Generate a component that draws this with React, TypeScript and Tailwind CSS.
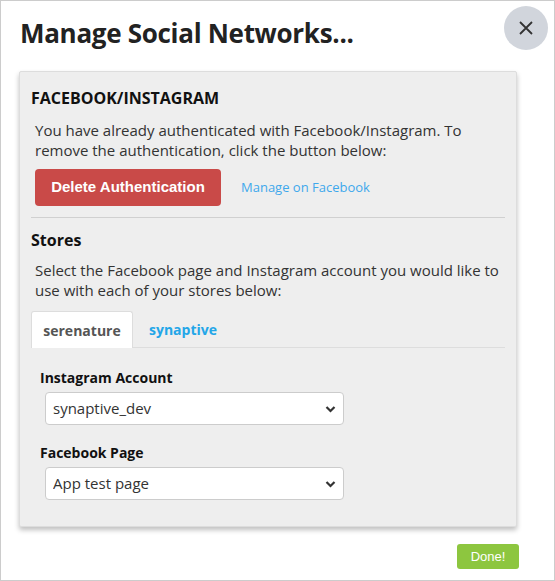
import { useState } from "react";

const stores = ["serenature", "synaptive"];

function SelectField({ label, value }: { label: string; value: string }) {
  return (
    <div>
      <label className="block pl-[9px] text-[14px] leading-[20px] font-bold text-[#111]">
        {label}
      </label>
      <div className="relative mt-[4px] ml-[14px] w-[299px]">
        <select
          defaultValue={value}
          className="block h-[33px] w-full appearance-none rounded-[4px] border border-[#cccccc] bg-white pl-[7px] text-[15px] text-[#333]"
        >
          <option>{value}</option>
        </select>
        <svg
          className="pointer-events-none absolute top-[13px] right-[8px] h-[8px] w-[11px] text-[#333]"
          viewBox="0 0 11 8"
          fill="none"
          stroke="currentColor"
          strokeWidth={2.2}
        >
          <path d="M1.5 2l4 4 4-4" />
        </svg>
      </div>
    </div>
  );
}

export default function App() {
  const [active, setActive] = useState("serenature");

  return (
    <div
      className="relative h-[581px] w-[555px] border border-[#cccccc] bg-white text-[#333]"
      style={{ fontFamily: '"Open Sans", sans-serif' }}
    >
      <div className="flex items-start justify-between pt-[5px] pr-[6px] pl-[19px]">
        <h1 className="mt-[11px] text-[26px] leading-[32px] font-bold tracking-[-0.3px] text-[#222]">
          Manage Social Networks...
        </h1>
        <button className="flex h-[44px] w-[44px] items-center justify-center rounded-full bg-[#d1d5dc] text-[#333]">
          <svg viewBox="0 0 16 16" className="h-[16px] w-[16px]" stroke="currentColor" strokeWidth={1.8}>
            <path d="M2 2l12 12M14 2L2 14" />
          </svg>
        </button>
      </div>

      <div className="mt-[21px] ml-[18px] w-[498px] rounded-[2px] border border-[#dddddd] bg-[#eeeeee] px-[11px] pt-[15px] pb-[26px] shadow-[0_3px_5px_rgba(0,0,0,0.25)]">
        <h2 className="text-[16px] leading-[22px] font-bold text-[#111]">FACEBOOK/INSTAGRAM</h2>
        <p className="mt-[11px] pl-[4px] text-[15px] leading-[20px]">
          You have already authenticated with Facebook/Instagram. To remove the authentication, click the button below:
        </p>
        <div className="mt-[9px] flex items-center pl-[4px]">
          <button
            className="h-[37px] w-[186px] rounded-[4px] bg-[#c94a48] text-[15px] font-bold text-white"
            style={{ fontFamily: '"Liberation Sans", Arial, sans-serif' }}
          >
            Delete Authentication
          </button>
          <a className="ml-[20px] text-[13px] text-[#3ea8ec]">Manage on Facebook</a>
        </div>
        <div className="mt-[11px] border-t border-[#d0d0d0]" />

        <h2 className="mt-[11px] text-[16px] leading-[22px] font-bold text-[#111]">Stores</h2>
        <p className="mt-[9px] pl-[4px] text-[15px] leading-[20px]">
          Select the Facebook page and Instagram account you would like to use with each of your stores below:
        </p>

        <div className="mt-[11px] flex border-b border-[#dddddd]">
          {stores.map((s) =>
            s === active ? (
              <button
                key={s}
                onClick={() => setActive(s)}
                className="-mb-px h-[37px] w-[102px] rounded-t-[3px] border border-b-0 border-[#dddddd] bg-white text-[14px] font-bold text-[#555]"
              >
                {s}
              </button>
            ) : (
              <button
                key={s}
                onClick={() => setActive(s)}
                className="h-[36px] px-[16px] text-[14px] font-bold text-[#23a6e8]"
              >
                {s}
              </button>
            )
          )}
        </div>

        <div className="mt-[20px]">
          <SelectField label="Instagram Account" value="synaptive_dev" />
        </div>
        <div className="mt-[18px]">
          <SelectField label="Facebook Page" value="App test page" />
        </div>
      </div>

      <div className="mt-[17px] flex justify-end pr-[35px]">
        <button
          className="h-[25px] w-[62px] rounded-[3px] bg-[#8dc63f] text-[13px] text-white"
          style={{ fontFamily: '"Liberation Sans", Arial, sans-serif' }}
        >
          Done!
        </button>
      </div>
    </div>
  );
}
